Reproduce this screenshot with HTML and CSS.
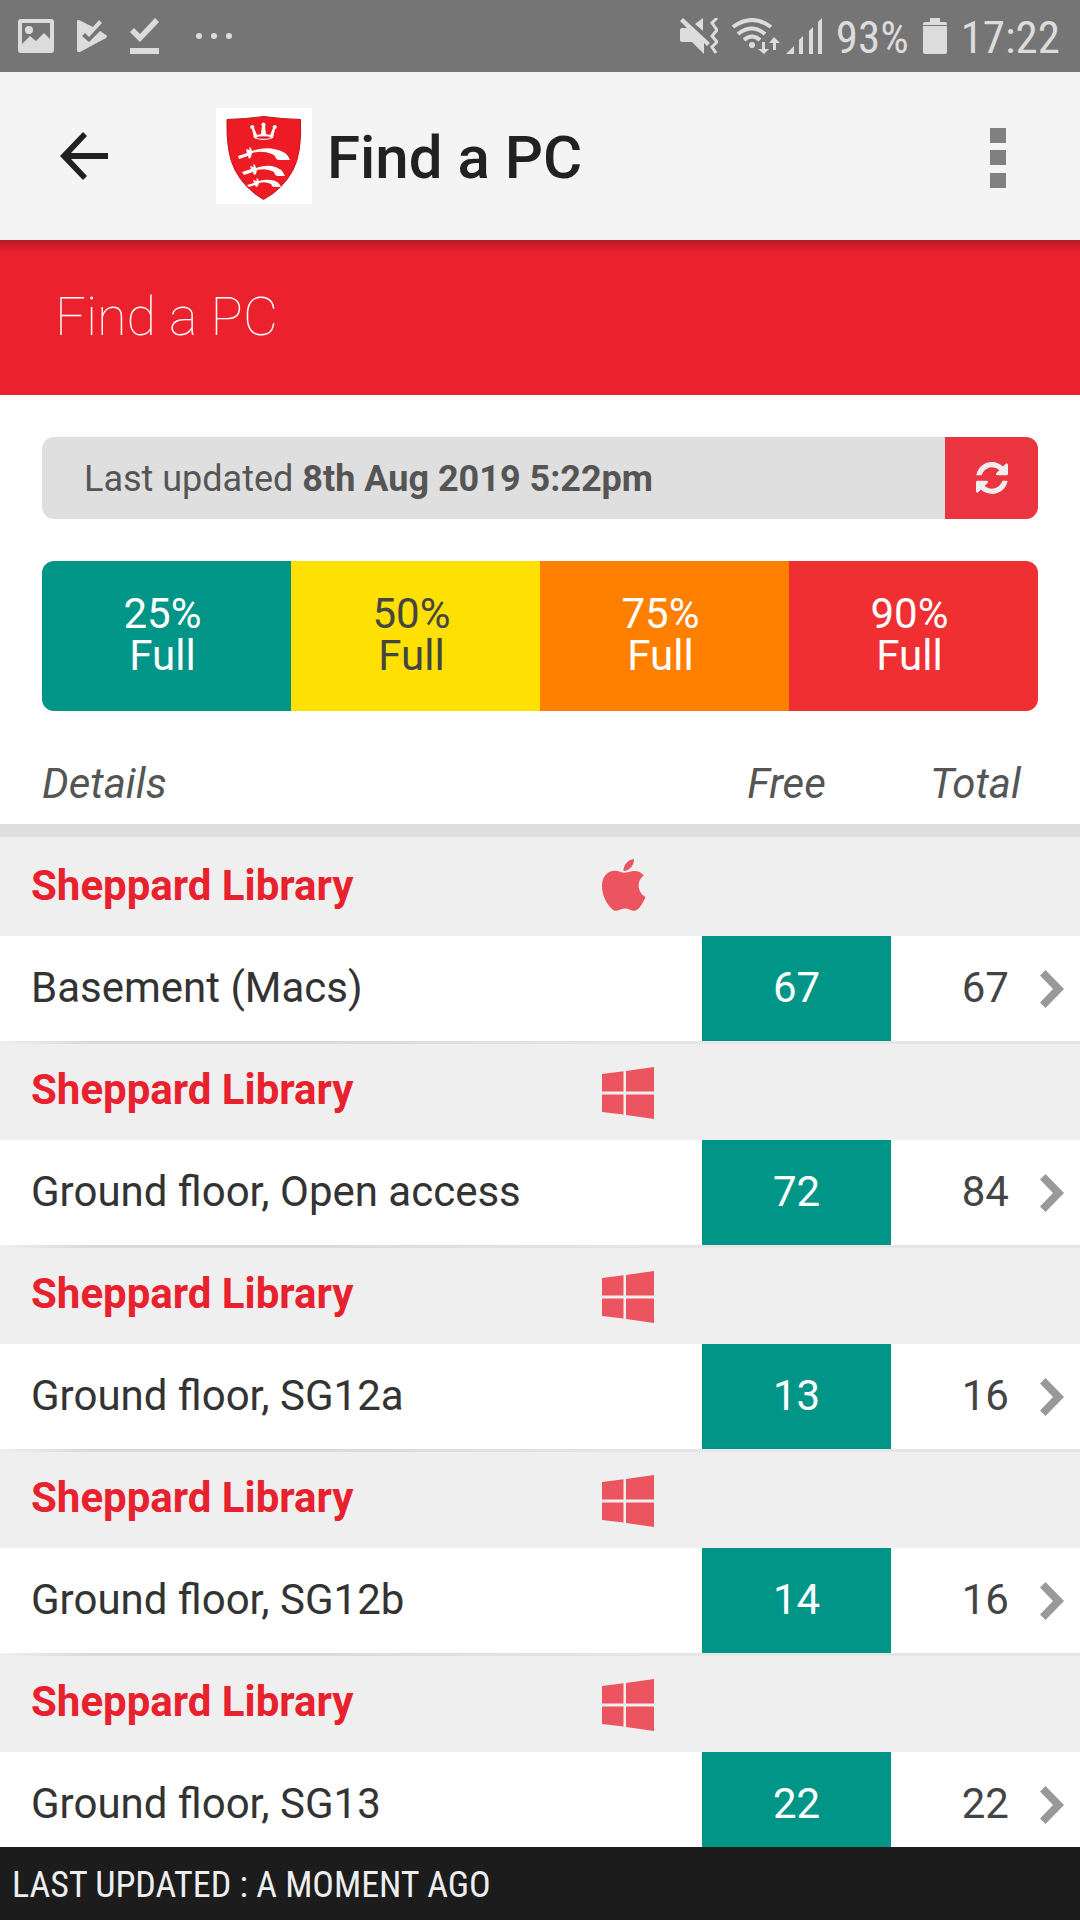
FILE: index.html
```html
<!DOCTYPE html>
<html lang="en">
<head>
  <meta charset="UTF-8">
  <meta name="viewport" content="width=device-width, initial-scale=1.0">
  <title>Find a PC</title>
  <link rel="stylesheet" href="styles.css">
</head>
<body>

<!-- shared icons -->
<svg class="sprite" width="0" height="0" aria-hidden="true">
  <symbol id="icon-apple" viewBox="0 0 52 56">
    <path d="M32 0c.3 6-4.400 12-10.500 12C21.200 6 26 .6 32 0zM31.500 12c4.500-.5 8 1.200 10.300 4.500-7.500 5-6.800 17 1.700 21.500C41.500 43 38 48.500 35.500 50.500c-2.500 2-4.800 1.500-7.500.3-3.500-1.600-6.500-1.600-9.500-.2-3.500 1.700-6.300 1.700-9-1.100C4 44 0 36 0 27c0-11 7-15.300 12.500-15.300 4.500 0 7 2 10 2 2.500 0 5-1.300 9-1.700z"/>
  </symbol>
  <symbol id="icon-windows" viewBox="0 0 52 56">
    <path d="M0 11l21.500-2.700V28.500H0zM24 8l28-4v24.500H24zM0 31.500h21.500v20L0 49zM24 31.500h28V56l-28-4z"/>
  </symbol>
  <symbol id="icon-chevron" viewBox="0 0 24 38">
    <path d="M5.500 0L24 19 5.500 38 0 32.500 13 19 0 5.500z"/>
  </symbol>
</svg>

<div class="status-bar">
  <div class="status-left">
    <svg width="36" height="34" viewBox="0 0 36 34" aria-hidden="true">
      <path fill-rule="evenodd" d="M3 0h30a3 3 0 0 1 3 3v28a3 3 0 0 1-3 3H3a3 3 0 0 1-3-3V3a3 3 0 0 1 3-3zm1 4v21l8-8 6 5 8-8 6 6V4z"/>
      <circle cx="11" cy="11" r="4"/>
    </svg>
    <svg width="30" height="32" viewBox="0 0 30 32" aria-hidden="true">
      <path d="M2 0l14 7L22 0l3 3-13 14-4-4-3 3 7 6L23 11l6 4q2 1 0 3L3 32q-3 1-3-2V2q0-3 2-2z"/>
    </svg>
    <svg width="30" height="36" viewBox="0 0 30 36" aria-hidden="true">
      <path d="M0 30h29v6H0zM0 14l4-4 6 6L25 0l4 4-19 20z"/>
    </svg>
    <svg class="dots" width="38" height="6" viewBox="0 0 38 6" aria-hidden="true">
      <circle cx="4" cy="3" r="3"/><circle cx="19" cy="3" r="3"/><circle cx="34" cy="3" r="3"/>
    </svg>
  </div>
  <div class="status-right">
    <svg width="38" height="36" viewBox="0 0 38 36" aria-hidden="true">
      <path d="M0 12q0-2 2-2h5L0 3l3-3 27 25-3 3-3-3v11L12 24H2q-2 0-2-2zM15 6l8-6v13z"/>
      <path class="line" stroke-width="3" d="M37 0l-5 5 5 7-5 6 5 6-5 5 4 6"/>
    </svg>
    <svg width="48" height="36" viewBox="0 0 48 36" aria-hidden="true">
      <g class="line" stroke-width="4">
        <path d="M1 9q19-14 38 0M6 16q14-11 27 0M12 22q8-7 16 0"/>
      </g>
      <circle cx="20" cy="27" r="3"/>
      <path d="M30 24h3v7h4l-5 5-6-5h4zM41 32h3v-7h4l-6-6-5 6h4z"/>
    </svg>
    <svg class="signal" width="36" height="36" viewBox="0 0 36 36" aria-hidden="true">
      <path d="M0 36l8-8v8zM13 36V22l4-4v18zM23 36V13l4-4v27zM32 36V4l4-4v36z"/>
    </svg>
    <span>93%</span>
    <svg width="24" height="36" viewBox="0 0 24 36" aria-hidden="true">
      <path d="M7 0h10v4h5q2 0 2 2v1H0V6q0-2 2-2h5zM0 8h24v26q0 2-2 2H2q-2 0-2-2z"/>
    </svg>
    <span>17:22</span>
  </div>
</div>

<header class="app-bar">
  <button class="icon-btn back" type="button" aria-label="Back">
    <svg width="48" height="48" viewBox="0 0 48 48">
      <path d="M48 21v6H11l16 17-4 4L0 24 23 0l4 4-16 17z"/>
    </svg>
  </button>
  <svg class="crest" width="96" height="96" viewBox="0 0 96 96" role="img" aria-label="University crest">
    <path class="shield" d="M11 11.500Q30 11 47.500 8.500 66 11 84.500 11.500 86 45 77 62 67 81 47.500 91.500 29 81 19 62 10 45 11 11.500z"/>
    <path class="charge" d="M38 20l3 7 4-1 1-8a2 2 0 1 1 3 0l1 8 4 1 3-7a2 2 0 1 1 2 1l-2 9q-9.500 4-19 0l-2-9a2 2 0 1 1 2-1z"/>
    <ellipse class="hollow" cx="47.500" cy="29.500" rx="7" ry="1.300"/>
    <path class="charge" d="M22 48l9-3-1-4 4 1-1-3 2 1 1 3q12-4 22-2 13 2 16 11H63q-3 0-4-4l-3-2q-10-4-20-1l-1 4-2 2-1-3-9 3z"/>
    <path class="charge" d="M26 64l9-3-1-3 4 1-1-3 2 1 1 3q9-3 16-2 10 2 13 10H62q-3 0-4-4l-2-1q-7-3-15-1l-1 4-2 1-1-3-9 3z"/>
    <path class="charge" d="M31 77l7-2-1-3 4 1-1-3 2 1 1 2q6-2 12-1 8 1 10 7h-7q-2 0-3-3-6-3-12-1l-1 3-2 1-1-2-6 2z"/>
  </svg>
  <h1>Find a PC</h1>
  <button class="icon-btn menu" type="button" aria-label="More options">
    <svg width="16" height="60" viewBox="0 0 16 60">
      <path d="M0 0h16v15H0zM0 22h16v15H0zM0 45h16v15H0z"/>
    </svg>
  </button>
</header>

<main>
  <h2 class="banner">Find a PC</h2>

  <div class="updated">
    <p>Last updated <strong>8th Aug 2019 5:22pm</strong></p>
    <button type="button" aria-label="Refresh">
      <svg width="32" height="32" viewBox="0 0 1536 1536">
        <path d="M1511 928q0 5-1 7-64 268-268 434.500T764 1536q-146 0-282.500-55T238 1324l-129 129q-19 19-45 19t-45-19-19-45V960q0-26 19-45t45-19h448q26 0 45 19t19 45-19 45l-137 137q71 66 161 102t187 36q134 0 250-65t186-179q11-17 53-117 8-23 30-23h192q13 0 22.500 9.500t9.500 22.500zm25-800v448q0 26-19 45t-45 19h-448q-26 0-45-19t-19-45 19-45l138-138Q969 256 768 256q-134 0-250 65T332 500q-11 17-53 117-8 23-30 23H50q-13 0-22.500-9.500T18 608v-7q65-268 270-434.500T768 0q146 0 284 55.500T1297 212l130-129q19-19 45-19t45 19 19 45z"/>
      </svg>
    </button>
  </div>

  <ul class="legend">
    <li class="low">25%<br>Full</li>
    <li class="half">50%<br>Full</li>
    <li class="busy">75%<br>Full</li>
    <li class="packed">90%<br>Full</li>
  </ul>

  <table class="pc-table">
    <colgroup>
      <col class="col-details">
      <col class="col-icon">
      <col class="col-free">
      <col>
      <col class="col-link">
    </colgroup>
    <thead>
      <tr>
        <th class="details" colspan="2">Details</th>
        <th>Free</th>
        <th colspan="2">Total</th>
      </tr>
    </thead>
    <tbody>
      <tr class="group">
        <th>Sheppard Library</th>
        <td colspan="4"><svg class="os" role="img" aria-label="Mac"><use href="#icon-apple"/></svg></td>
      </tr>
      <tr class="room">
        <td colspan="2">Basement (Macs)</td>
        <td class="free">67</td>
        <td class="total">67</td>
        <td class="more"><a href="#basement" aria-label="Basement (Macs)"><svg><use href="#icon-chevron"/></svg></a></td>
      </tr>
      <tr class="group">
        <th>Sheppard Library</th>
        <td colspan="4"><svg class="os" role="img" aria-label="Windows"><use href="#icon-windows"/></svg></td>
      </tr>
      <tr class="room">
        <td colspan="2">Ground floor, Open access</td>
        <td class="free">72</td>
        <td class="total">84</td>
        <td class="more"><a href="#open-access" aria-label="Ground floor, Open access"><svg><use href="#icon-chevron"/></svg></a></td>
      </tr>
      <tr class="group">
        <th>Sheppard Library</th>
        <td colspan="4"><svg class="os" role="img" aria-label="Windows"><use href="#icon-windows"/></svg></td>
      </tr>
      <tr class="room">
        <td colspan="2">Ground floor, SG12a</td>
        <td class="free">13</td>
        <td class="total">16</td>
        <td class="more"><a href="#sg12a" aria-label="Ground floor, SG12a"><svg><use href="#icon-chevron"/></svg></a></td>
      </tr>
      <tr class="group">
        <th>Sheppard Library</th>
        <td colspan="4"><svg class="os" role="img" aria-label="Windows"><use href="#icon-windows"/></svg></td>
      </tr>
      <tr class="room">
        <td colspan="2">Ground floor, SG12b</td>
        <td class="free">14</td>
        <td class="total">16</td>
        <td class="more"><a href="#sg12b" aria-label="Ground floor, SG12b"><svg><use href="#icon-chevron"/></svg></a></td>
      </tr>
      <tr class="group">
        <th>Sheppard Library</th>
        <td colspan="4"><svg class="os" role="img" aria-label="Windows"><use href="#icon-windows"/></svg></td>
      </tr>
      <tr class="room">
        <td colspan="2">Ground floor, SG13</td>
        <td class="free">22</td>
        <td class="total">22</td>
        <td class="more"><a href="#sg13" aria-label="Ground floor, SG13"><svg><use href="#icon-chevron"/></svg></a></td>
      </tr>
    </tbody>
  </table>
</main>

<footer class="footer">LAST UPDATED : A MOMENT AGO</footer>

</body>
</html>
```
FILE: styles.css
```css
* {
  box-sizing: border-box;
}

body {
  margin: 0;
  background: #fff;
  color: #333;
  font-family: Roboto, "Liberation Sans", sans-serif;
  font-size: 42px;
}

h1,
h2,
p,
ul {
  margin: 0;
  padding: 0;
}

svg {
  display: block;
  fill: currentColor;
}

button {
  border: none;
  padding: 0;
  cursor: pointer;
}

.sprite {
  position: absolute;
}

/* Status bar */
.status-bar {
  display: flex;
  justify-content: space-between;
  align-items: center;
  height: 72px;
  padding: 0 20px 0 18px;
  background: #757575;
  color: #dcdcdc;
  font-family: "Roboto Condensed", Roboto, sans-serif;
}

.status-left,
.status-right {
  display: flex;
  align-items: center;
}

.status-left {
  gap: 23px;
}

.status-left .dots {
  margin-left: 12px;
}

.status-right {
  gap: 14px;
  font-size: 45px;
}

.status-right span {
  padding-top: 2px;
}

.status-right .signal {
  margin-left: -8px;
}

.line {
  fill: none;
  stroke: currentColor;
}

/* App bar */
.app-bar {
  display: flex;
  align-items: center;
  height: 168px;
  padding: 0 60px;
  background: #f4f4f4;
  color: #212121;
}

.icon-btn {
  background: none;
  color: inherit;
}

.crest {
  margin: 0 15px 0 108px;
  background: #fff;
}

.shield,
.hollow {
  fill: #ed1c24;
}

.shield {
  stroke: #c4161c;
}

.charge {
  fill: #fff;
}

.app-bar h1 {
  padding-top: 3px;
  font-size: 60px;
  font-weight: 500;
}

.menu {
  margin: 4px 14px 0 auto;
  color: #808080;
}

/* Page heading */
.banner {
  padding: 41px 55px 43px;
  background: linear-gradient(#b41c25, #eb212d 12px);
  color: #fff;
  font-size: 54px;
  font-weight: 100;
  line-height: 71px;
}

/* Last updated */
.updated {
  display: flex;
  margin: 42px 42px 0;
  border-radius: 12px;
  overflow: hidden;
  background: #dfdfdf;
  color: #555;
  font-size: 36px;
}

.updated p {
  flex: 1;
  padding: 2px 0 0 42px;
  line-height: 80px;
}

.updated button {
  display: flex;
  align-items: center;
  justify-content: center;
  width: 93px;
  background: #ea3541;
  color: #eee;
}

/* Legend */
.legend {
  display: flex;
  margin: 42px 42px 0;
  border-radius: 12px;
  overflow: hidden;
  list-style: none;
  color: #fff;
  line-height: 42px;
  text-align: center;
}

.legend li {
  flex: 1;
  padding: 32px 8px 34px 0;
}

.low,
.free {
  background: #009587;
}

.half {
  background: #fee002;
  color: #444;
}

.busy {
  background: #ff8000;
}

.packed {
  background: #f02f32;
}

/* PC table */
.pc-table {
  width: 100%;
  border-spacing: 0;
  table-layout: fixed;
}

.col-details {
  width: 55.7%;
}

.col-icon {
  width: 9.3%;
}

.col-free {
  width: 17.5%;
}

.col-link {
  width: 56px;
}

.pc-table th,
.pc-table td {
  padding: 0;
  text-align: left;
}

.pc-table thead th {
  height: 126px;
  padding: 32px 20px 0 0;
  border-bottom: 13px solid #dfdfdf;
  color: #555;
  font-style: italic;
  font-weight: 400;
  line-height: 50px;
  text-align: center;
}

.pc-table thead .details {
  padding-left: 42px;
  text-align: left;
}

.group {
  height: 99px;
  background: #efefef;
  color: #e8212e;
}

.room + .group {
  background: linear-gradient(90deg, #efefef, #dadada 8%, #dadada 30%, #e6e6e6 60%) top / 100% 3px no-repeat #efefef;
}

.pc-table .group th,
.pc-table .room td:first-child {
  padding: 0 0 2px 31px;
}

.os {
  width: 52px;
  height: 56px;
  color: #ec555f;
}

.room {
  height: 105px;
}

.pc-table .free,
.pc-table .total {
  padding-bottom: 2px;
}

.pc-table .free {
  color: #fff;
  text-align: center;
}

.pc-table .total {
  padding-right: 15px;
  color: #444;
  text-align: right;
}

.more a {
  display: block;
  padding-left: 16px;
  color: #999;
}

.more svg {
  width: 24px;
  height: 38px;
}

/* Footer */
.footer {
  position: fixed;
  right: 0;
  bottom: 0;
  left: 0;
  padding: 4px 0 0 12px;
  background: #1c1c1c;
  color: #eee;
  font-family: "Roboto Condensed", Roboto, sans-serif;
  font-size: 36px;
  line-height: 69px;
}
```
